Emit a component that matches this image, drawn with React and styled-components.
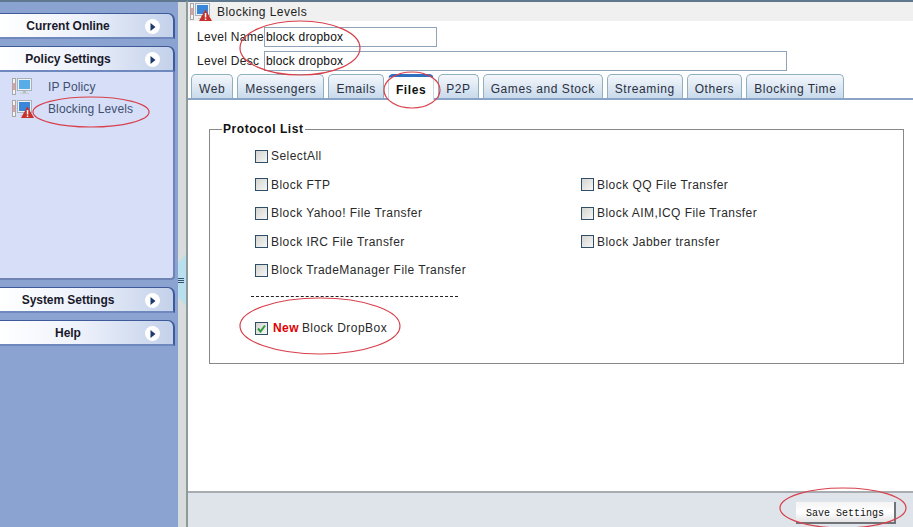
import React from 'react'
import styled, { createGlobalStyle } from 'styled-components'

const Global = createGlobalStyle`
html, body {
  margin: 0;
  padding: 0;
  height: 100%;
  overflow: hidden;
  background: #fff;
}
#root {
  height: 527px;
}
`;

const tabs = ['Web', 'Messengers', 'Emails', 'Files', 'P2P', 'Games and Stock', 'Streaming', 'Others', 'Blocking Time']
const protocols = [
  ['Block FTP', 'Block QQ File Transfer'],
  ['Block Yahoo! File Transfer', 'Block AIM,ICQ File Transfer'],
  ['Block IRC File Transfer', 'Block Jabber transfer'],
  ['Block TradeManager File Transfer', null],
]
const rings = [
  [91, 112, 58, 15],
  [300, 48, 60, 27],
  [412, 90, 28, 18],
  [320, 326, 80, 28],
  [843, 508, 63, 20],
]

function MonitorIcon({ warn }) {
  return (
    <svg width="22" height="18" viewBox="0 0 22 18">
      <rect x="0.5" y="0.5" width="3" height="16" fill="#f4f4f4" stroke="#a8a8a8" />
      <rect x="1.5" y="5" width="1" height="7" fill="#c85050" />
      <rect x="5.5" y="0.5" width="14" height="12" fill="#eef2f6" stroke="#a8b0b8" />
      <rect x="7" y="2" width="11" height="9" fill={warn ? '#3a86d8' : '#58ace8'} />
      <rect x="11" y="13" width="3" height="2" fill="#b8bcc0" />
      <rect x="8" y="15" width="9" height="1" fill="#c8ccd0" />
      {warn && <path d="M15.5 6.5 L22 18 L9 18 Z" fill="#c8302c" />}
      {warn && <rect x="14.8" y="10" width="1.5" height="4.5" fill="#fff" />}
      {warn && <rect x="14.8" y="15.5" width="1.5" height="1.5" fill="#fff" />}
    </svg>
  )
}

function Header({ children }) {
  return (
    <SideHeader>
      <span>{children}</span>
      <Arrow>
        <svg width="8" height="8" viewBox="0 0 8 8"><path d="M1.5 0 L6.5 4 L1.5 8 Z" fill="#1f3a70" /></svg>
      </Arrow>
    </SideHeader>
  )
}

function Option({ label, checked, isNew }) {
  return (
    <OptionRow>
      <Box $checked={checked}>
        {checked && <svg width="9" height="9" viewBox="0 0 9 9"><path d="M1 4.5 L3.5 7.5 L8 1.5" fill="none" stroke="#2f9a3a" strokeWidth="2" /></svg>}
      </Box>
      {isNew && <NewTag>New</NewTag>}
      <span>{label}</span>
    </OptionRow>
  )
}

export default function App() {
  return (
    <>
      <Global />
      <Page>
        <Sidebar>
          <Header>Current Online</Header>
          <Group>
            <Header>Policy Settings</Header>
            <Panel>
              <PanelItem><MonitorIcon /><span>IP Policy</span></PanelItem>
              <PanelItem><MonitorIcon warn /><span>Blocking Levels</span></PanelItem>
            </Panel>
          </Group>
          <Header>System Settings</Header>
          <Header>Help</Header>
        </Sidebar>
        <Splitter>
          <Handle>
            <Grip /><Grip /><Grip />
          </Handle>
        </Splitter>
        <Main>
          <TitleBar>
            <MonitorIcon warn />
            <span>Blocking Levels</span>
          </TitleBar>
          <Field>
            <span>Level Name</span>
            <TextBox $width={173}>block dropbox</TextBox>
          </Field>
          <Field>
            <span>Level Desc</span>
            <TextBox $width={523}>block dropbox</TextBox>
          </Field>
          <TabBar>
            {tabs.map((t) => (
              <Tab key={t} $active={t === 'Files'}>{t}</Tab>
            ))}
          </TabBar>
          <Content>
            <ProtocolBox>
              <legend>Protocol List</legend>
              <Option label="SelectAll" />
              <ProtocolGrid>
                {protocols.flat().map((p, i) => (
                  p ? <Option key={p} label={p} /> : <span key={i} />
                ))}
              </ProtocolGrid>
              <Divider />
              <Option label="Block DropBox" checked isNew />
            </ProtocolBox>
          </Content>
          <Footer>
            <SaveButton type="button">Save Settings</SaveButton>
          </Footer>
        </Main>
        <Rings width="913" height="527" viewBox="0 0 913 527">
          {rings.map(([cx, cy, rx, ry]) => (
            <ellipse key={cx} cx={cx} cy={cy} rx={rx} ry={ry} fill="none" stroke="#d8404c" strokeWidth="1.2" />
          ))}
        </Rings>
      </Page>
    </>
  )
}

const Page = styled.div`
position: relative;
display: flex;
width: 913px;
height: 527px;
overflow: hidden;
font-family: "Liberation Sans", Arial, sans-serif;
font-size: 12px;
letter-spacing: 0.45px;
color: #222;
`;
const Sidebar = styled.aside`
width: 178px;
flex: none;
box-sizing: border-box;
padding: 11px 3px 0 0;
background: #8aa3d0;
border-top: 2px solid #5f7890;
display: flex;
flex-direction: column;
gap: 7px;
`;
const SideHeader = styled.div`
height: 26px;
box-sizing: border-box;
display: flex;
align-items: center;
justify-content: center;
position: relative;
padding-right: 37px;
font-weight: bold;
letter-spacing: -0.05px;
color: #1a1a2a;
background: linear-gradient(90deg, #ffffff 0%, #eef2fb 45%, #c3d1ea 100%);
border-top: 1px solid #3f5a98;
border-right: 2px solid #3f5a98;
border-top-right-radius: 7px;
border-bottom: 2px solid #6f88bd;
`;
const Arrow = styled.i`
position: absolute;
right: 13px;
top: 5px;
width: 15px;
height: 15px;
border-radius: 50%;
background: #fff;
display: flex;
align-items: center;
justify-content: center;
`;
const Group = styled.div`
display: flex;
flex-direction: column;
`;
const Panel = styled.div`
height: 208px;
box-sizing: border-box;
padding: 5px 0 0 12px;
background: #d6dff7;
border-right: 2px solid #6f84b4;
border-bottom: 2px solid #6f84b4;
border-bottom-right-radius: 4px;
display: flex;
flex-direction: column;
gap: 2px;
`;
const PanelItem = styled.div`
display: flex;
align-items: center;
gap: 14px;
height: 20px;
letter-spacing: 0.12px;
color: #3f4f70;
`;
const Splitter = styled.div`
width: 10px;
flex: none;
background: #d8dcdc;
border-right: 2px solid #8f9a9a;
border-top: 2px solid #5f7890;
padding-top: 252px;
box-sizing: border-box;
`;
const Handle = styled.div`
width: 8px;
height: 52px;
background: #b8e0ee;
display: flex;
flex-direction: column;
justify-content: center;
gap: 1px;
clip-path: polygon(0 9px, 100% 0, 100% 100%, 0 43px);
`;
const Grip = styled.i`
display: block;
width: 6px;
height: 1px;
background: #355070;
`;
const Main = styled.main`
flex: 1;
min-width: 0;
display: flex;
flex-direction: column;
background: #fff;
`;
const TitleBar = styled.div`
height: 21px;
flex: none;
box-sizing: border-box;
display: flex;
align-items: center;
gap: 5px;
padding: 1px 0 0 2px;
background: #f0f0f0;
border-top: 2px solid #5f7890;
`;
const Field = styled.div`
display: flex;
align-items: center;
height: 20px;
margin-top: 6px;
padding-left: 9px;
letter-spacing: 0.3px;
& + & { margin-top: 4px; }
> span {
  width: 67px;
  flex: none;
  white-space: nowrap;
}
`;
const TextBox = styled.div`
width: ${(p) => p.$width}px;
height: 20px;
box-sizing: border-box;
line-height: 18px;
padding-left: 1px;
border: 1px solid #8fa4b8;
letter-spacing: 0.2px;
color: #111;
`;
const TabBar = styled.div`
display: flex;
gap: 4px;
height: 26px;
box-sizing: border-box;
margin-top: 3px;
padding-left: 3px;
border-bottom: 2px solid #8aa4c8;
`;
const Tab = styled.div`
height: 24px;
box-sizing: border-box;
padding: 0 7px;
line-height: 28px;
letter-spacing: 0.58px;
white-space: nowrap;
border: 1px solid #8fb0bc;
border-bottom: none;
border-top-left-radius: 5px;
border-top-right-radius: 5px;
background: linear-gradient(#f4f7fb, #c8daec);
color: #2a3040;
${(p) => p.$active && `
  font-weight: bold;
  letter-spacing: 0.6px;
  color: #111;
  background: #fff;
  border-top: 3px solid #2f6fc0;
  border-left-color: #c8d8e4;
  border-right-color: #c8d8e4;
  line-height: 26px;
  margin-bottom: -2px;
  height: 26px;
`}
`;
const Content = styled.div`
flex: 1;
padding: 22px 9px 0 21px;
`;
const ProtocolBox = styled.fieldset`
margin: 0;
height: 242px;
box-sizing: border-box;
padding: 13px 0 0 45px;
border: 1px solid #888;
legend {
  padding: 0 1px;
  margin-left: -33px;
  font-weight: bold;
  letter-spacing: 0.55px;
  color: #111;
}
`;
const OptionRow = styled.label`
display: flex;
align-items: center;
height: 14px;
gap: 3px;
color: #2a2a2a;
white-space: nowrap;
`;
const ProtocolGrid = styled.div`
display: grid;
grid-template-columns: 326px 1fr;
row-gap: 14.5px;
margin-top: 14.5px;
`;
const Box = styled.span`
width: 13px;
height: 13px;
flex: none;
box-sizing: border-box;
display: flex;
align-items: center;
justify-content: center;
border: 1px solid #2f4f68;
background: linear-gradient(135deg, #d4d4d0, #f6f6f6);
`;
const NewTag = styled.b`
color: #e00000;
font-size: 12px;
letter-spacing: 0.4px;
margin-left: 2px;
`;
const Divider = styled.div`
width: 207px;
margin: 19px 0 24px -4px;
border-top: 1px dashed #222;
`;
const Footer = styled.div`
height: 36px;
flex: none;
box-sizing: border-box;
display: flex;
justify-content: flex-end;
align-items: flex-start;
padding: 9px 17px 0 0;
background: #dfe3ea;
border-top: 2px solid #a8acb0;
`;
const SaveButton = styled.button`
width: 100px;
height: 22px;
padding: 2px 0 0;
font-family: "Liberation Mono", monospace;
font-size: 10px;
letter-spacing: 0;
color: #111;
background: linear-gradient(#f4f4f4, #ffffff 50%, #e4e4e4);
border: none;
border-right: 2px solid #707478;
border-bottom: 2px solid #707478;
`;
const Rings = styled.svg`
position: absolute;
left: 0;
top: 0;
pointer-events: none;
`;
